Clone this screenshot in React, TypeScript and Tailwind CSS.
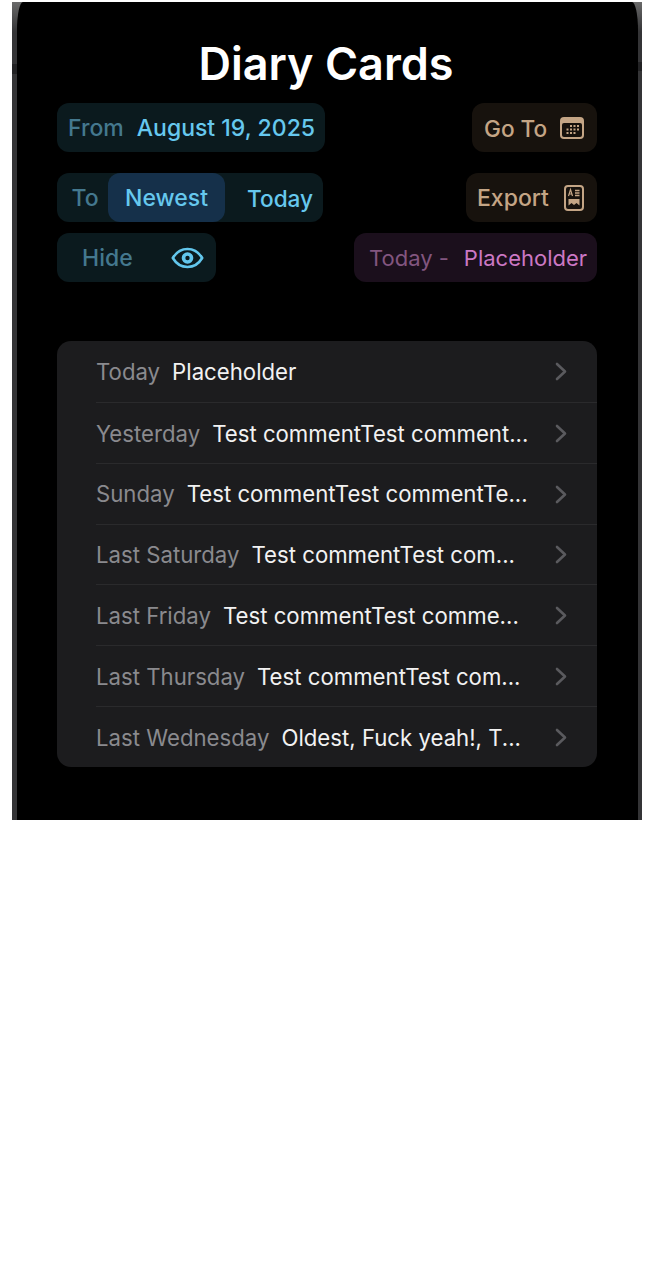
const ROWS = [
  { day: "Today", text: "Placeholder" },
  { day: "Yesterday", text: "Test commentTest comment..." },
  { day: "Sunday", text: "Test commentTest commentTe..." },
  { day: "Last Saturday", text: "Test commentTest com..." },
  { day: "Last Friday", text: "Test commentTest comme..." },
  { day: "Last Thursday", text: "Test commentTest com..." },
  { day: "Last Wednesday", text: "Oldest, Fuck yeah!, T..." },
];

function EyeIcon() {
  return (
    <svg width="33" height="22" viewBox="0 0 33 22" fill="none">
      <path d="M1.8 11C5.5 4.8 10.5 2 16.5 2S27.5 4.8 31.2 11C27.5 17.2 22.5 20 16.5 20S5.5 17.2 1.8 11Z" stroke="#62c6ec" strokeWidth="2.6" strokeLinejoin="round" />
      <circle cx="16.5" cy="11" r="5.8" fill="#62c6ec" />
      <circle cx="16.5" cy="11" r="2.2" fill="#0b1a1e" />
    </svg>
  );
}

function CalendarIcon() {
  return (
    <svg width="24" height="22" viewBox="0 0 24 22" fill="none">
      <rect x="0" y="0" width="24" height="22" rx="4" fill="#c4a585" />
      <rect x="2" y="6" width="20" height="14" rx="2" fill="#16110c" />
      <g fill="#c4a585">
        <rect x="10" y="8" width="2" height="2" />
        <rect x="13.5" y="8" width="2" height="2" />
        <rect x="17" y="8" width="2" height="2" />
        <rect x="6.5" y="11.5" width="2" height="2" />
        <rect x="10" y="11.5" width="2" height="2" />
        <rect x="13.5" y="11.5" width="2" height="2" />
        <rect x="17" y="11.5" width="2" height="2" />
        <rect x="6.5" y="15" width="2" height="2" />
        <rect x="10" y="15" width="2" height="2" />
        <rect x="13.5" y="15" width="2" height="2" />
      </g>
    </svg>
  );
}

function ExportIcon() {
  return (
    <svg width="20" height="26" viewBox="0 0 20 26" fill="none">
      <rect x="1" y="1" width="18" height="24" rx="3" stroke="#c4a585" strokeWidth="2" />
      <path d="M4.5 11L6.5 4.5L8.5 11M5.2 9H7.8" stroke="#c4a585" strokeWidth="1.2" />
      <path d="M11 5.5H15.5M11 8H15.5M11 10.5H15.5" stroke="#c4a585" strokeWidth="1.3" />
      <path d="M4.5 14H15.5V20.5L12.5 18L10 20L7.5 18L4.5 20.5Z" fill="#c4a585" />
    </svg>
  );
}

function Chevron() {
  return (
    <svg width="12" height="19" viewBox="0 0 12 19" fill="none">
      <path d="M2 2L10 9.5L2 17" stroke="#5a5a5e" strokeWidth="2.6" strokeLinecap="round" strokeLinejoin="round" />
    </svg>
  );
}

export default function App() {
  return (
    <div className="w-[650px] h-[1266px] bg-white pt-[2px] pl-[12px] font-['Inter',sans-serif]">
      <div className="relative w-[630px] h-[818px] bg-linear-to-b from-[#6a6a6a] to-[#343436] to-[30px] pl-[5px] pr-[4px]">
        {/* side button notches */}
        <div className="absolute left-0 top-[62px] w-[5px] h-[10px] bg-[#222224]" />
        <div className="absolute right-0 top-[60px] w-[4px] h-[9px] bg-[#222224]" />

        <div className="h-full bg-black rounded-tl-[6px_28px] rounded-tr-[6px_28px] pl-[40px] pr-[41px] pt-[38px]">
          <h1 className="text-center text-white text-[45px] leading-[48px] font-semibold mb-[15px] pr-[2px]">
            Diary Cards
          </h1>

          {/* TOP CONTROLS */}
          <div className="flex justify-between">
            <div className="h-[49px] w-[268px] rounded-[12px] bg-[#0b1a1e] flex items-center pl-[11px] pt-[2px] text-[23px]">
              <span className="text-[#44788e] font-medium">From</span>
              <span className="ml-[13px] text-[#66c8ee] font-medium">August 19, 2025</span>
            </div>
            <div className="h-[49px] w-[125px] rounded-[12px] bg-[#17120d] flex items-center justify-between pl-[12px] pr-[13px] text-[22.6px] text-[#c4a585] font-medium">
              <span className="pt-[2px]">Go To</span>
              <CalendarIcon />
            </div>
          </div>

          <div className="flex justify-between mt-[21px]">
            <div className="h-[49px] w-[266px] rounded-[12px] bg-[#0b1a1e] flex items-center text-[23px]">
              <span className="w-[51px] pl-[5px] pt-[2px] text-center text-[#44788e] font-medium">To</span>
              <span className="w-[117px] h-full pt-[2px] rounded-[12px] bg-[#15304a] flex items-center justify-center text-[#66c8ee] font-medium">
                Newest
              </span>
              <span className="ml-[22px] pt-[2px] text-[22.6px] text-[#66c8ee] font-medium">Today</span>
            </div>
            <div className="h-[49px] w-[131px] rounded-[12px] bg-[#17120d] flex items-center justify-between pl-[11px] pr-[13px] text-[23px] text-[#c4a585] font-medium">
              <span className="pt-[2px]">Export</span>
              <ExportIcon />
            </div>
          </div>

          <div className="flex justify-between mt-[11px]">
            <div className="h-[49px] w-[159px] rounded-[12px] bg-[#0b1a1e] flex items-center justify-between pl-[25px] pr-[12px] text-[23px]">
              <span className="pt-[2px] text-[#44788e] font-medium">Hide</span>
              <EyeIcon />
            </div>
            <div className="h-[49px] w-[243px] rounded-[12px] bg-[#1b0f1c] flex items-center pl-[15px] pt-[2px] text-[22px]">
              <span className="text-[#82557f]">Today -</span>
              <span className="ml-[15px] text-[#cc78c4]">Placeholder</span>
            </div>
          </div>

          {/* DAY LIST */}
          <div className="mt-[59px] rounded-[14px] bg-[#1c1c1e] pl-[39px]">
            {ROWS.map((row, i) => (
              <div
                key={row.day}
                className={`h-[60.85px] flex items-center pt-[1px] pr-[30px] text-[22.2px] ${i > 0 ? "border-t border-[#2a2a2c]" : ""}`}
              >
                <span className="text-[#8a8a8e] whitespace-nowrap">{row.day}</span>
                <span className="ml-[12px] text-[#f2f2f2] whitespace-nowrap">{row.text}</span>
                <span className="ml-auto flex items-center">
                  <Chevron />
                </span>
              </div>
            ))}
          </div>
        </div>
      </div>
    </div>
  );
}
